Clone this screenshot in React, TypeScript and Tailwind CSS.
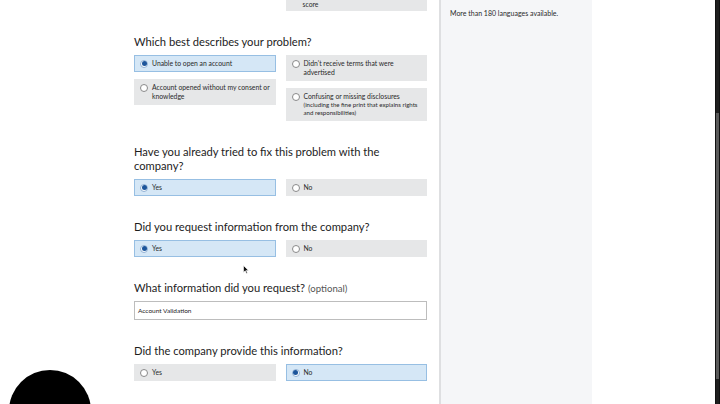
import React from "react";

type Opt = { label: string; sub?: string; selected?: boolean };

function Radio({ on }: { on?: boolean }) {
  return on ? (
    <span className="mt-[0.5px] flex h-[8px] w-[8px] shrink-0 items-center justify-center rounded-full border border-[#8fb0d4] bg-white">
      <span className="h-[5px] w-[5px] rounded-full bg-[#1c559b]" />
    </span>
  ) : (
    <span className="mt-[0.5px] h-[8px] w-[8px] shrink-0 rounded-full border border-[#8a8a8a] bg-white" />
  );
}

function Option({ label, sub, selected }: Opt) {
  return (
    <div
      className={
        "flex items-start gap-[4px] border py-[3px] pl-[5px] pr-[3px] " +
        (selected ? "border-[#97bfe3] bg-[#d5e7f6]" : "border-[#e6e7e8] bg-[#e6e7e8]")
      }
    >
      <Radio on={selected} />
      <div className="text-[6.8px] leading-[9px] text-[#2a2a2a]">
        <div>{label}</div>
        {sub && <div className="text-[6.1px] leading-[8px]">{sub}</div>}
      </div>
    </div>
  );
}

function Heading({ children }: { children: React.ReactNode }) {
  return (
    <h2 className="mb-[6px] h-auto max-w-[270px] text-[11.2px] leading-[14px] font-normal text-[#1d1d1d]">
      {children}
    </h2>
  );
}

function YesNo({ yes }: { yes: boolean }) {
  return (
    <div className="grid grid-cols-2 gap-x-[10px]">
      <Option label="Yes" selected={yes} />
      <Option label="No" selected={!yes} />
    </div>
  );
}

export default function App() {
  return (
    <div
      className="relative flex h-[404px] w-[720px] overflow-hidden bg-white"
      style={{ fontFamily: "Lato, 'Noto Sans', sans-serif" }}
    >
      <div className="w-[134px] shrink-0" />

      <div className="w-[293px] shrink-0">
        <div className="grid grid-cols-2 gap-x-[10px]">
          <div />
          <div className="flex h-[11px] items-end bg-[#e6e7e8] pb-[2px] pl-[17px] text-[6.8px] leading-[9px] text-[#2a2a2a]">
            score
          </div>
        </div>

        <section className="pt-[24px]">
          <Heading>Which best describes your problem?</Heading>
          <div className="grid grid-cols-2 gap-x-[10px]">
            <div className="flex flex-col gap-[7px]">
              <Option label="Unable to open an account" selected />
              <Option label="Account opened without my consent or knowledge" />
            </div>
            <div className="flex flex-col gap-[7px]">
              <Option label="Didn't receive terms that were advertised" />
              <Option
                label="Confusing or missing disclosures"
                sub="(including the fine print that explains rights and responsibilities)"
              />
            </div>
          </div>
        </section>

        <section className="pt-[24px]">
          <Heading>Have you already tried to fix this problem with the company?</Heading>
          <YesNo yes />
        </section>

        <section className="pt-[24px]">
          <Heading>Did you request information from the company?</Heading>
          <YesNo yes />
        </section>

        <section className="pt-[24px]">
          <h2 className="mb-[6px] flex h-[14px] items-baseline gap-[3px] text-[11.2px] leading-[14px] font-normal text-[#1d1d1d]">
            <span>What information did you request?</span>
            <span className="text-[9.6px] leading-[14px] text-[#555]">(optional)</span>
          </h2>
          <div className="flex h-[19px] items-center border border-[#bdbdbd] bg-white px-[3px] text-[6.5px] text-[#222]">
            Account Validation
          </div>
        </section>

        <section className="pt-[24px]">
          <Heading>Did the company provide this information?</Heading>
          <YesNo yes={false} />
        </section>
      </div>

      <div className="w-[12px] shrink-0" />

      <aside className="w-[153px] shrink-0 border-l-[2px] border-[#dedfe1] bg-[#f5f6f8] pl-[9px] pt-[8px]">
        <p className="text-[7px] leading-[10px] text-[#2a2a2a]">More than 180 languages available.</p>
      </aside>

      <div className="flex-1" />

      <div className="flex w-[5px] shrink-0 flex-col border-x border-[#111] bg-[#1f1f1f]">
        <div className="h-[113px]" />
        <div className="h-[266px] bg-[#5a5a5a]" />
      </div>

      <svg className="absolute left-[243px] top-[265px]" width="6" height="9" viewBox="0 0 6 9">
        <path d="M0.5 0.5 L0.5 7.5 L2.2 5.8 L3.4 8.5 L4.4 8 L3.3 5.4 L5.5 5.4 Z" fill="#111" stroke="#fff" strokeWidth="0.6" />
      </svg>

      <div className="absolute left-[9px] top-[370px] h-[82px] w-[82px] rounded-full bg-black" />
    </div>
  );
}
